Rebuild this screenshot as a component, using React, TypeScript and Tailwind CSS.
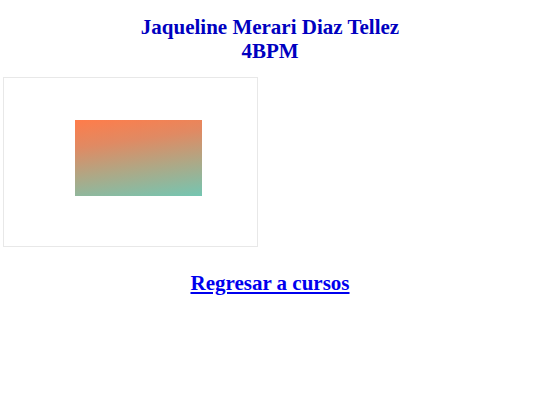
export default function App() {
  return (
    <div className="min-h-[405px] bg-white pt-[15px] font-['Liberation_Serif',serif]">
      <h2 className="text-center text-[21px] font-bold leading-[24px] text-[#0000c0]">
        Jaqueline Merari Diaz Tellez
        <br />
        4BPM
      </h2>
      <div className="ml-[3px] mt-[14px] h-[170px] w-[255px] border border-[#e8e8e8] pl-[71px] pt-[42px]">
        <div className="h-[76px] w-[127px] bg-[linear-gradient(172deg,#ff7c4a_0%,#e08a63_30%,#aea886_62%,#74c6b2_100%)]" />
      </div>
      <div className="mt-[24px] text-center">
        <a href="#" className="text-[21px] font-bold leading-[24px] text-[#0000ee] underline">
          Regresar a cursos
        </a>
      </div>
    </div>
  );
}
